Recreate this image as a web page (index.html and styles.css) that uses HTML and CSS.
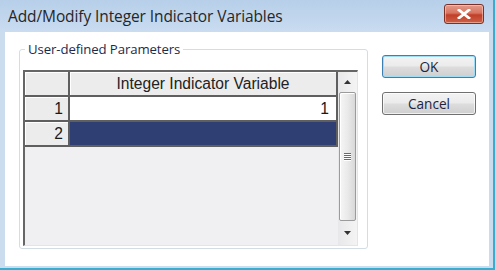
FILE: index.html
```html
<!DOCTYPE html>
<html>
<head>
<meta charset="utf-8">
<link rel="stylesheet" href="styles.css">
</head>
<body>
<div class="window">
  <div class="titlebar">
    <span class="title">Add/Modify Integer Indicator Variables</span>
    <div class="close">
      <svg width="14" height="10" viewBox="0 0 14 10"><path d="M2 1 L12 9 M12 1 L2 9" stroke="#fff" stroke-width="2.8" stroke-linecap="square" fill="none"/></svg>
    </div>
  </div>
  <div class="frame">
    <div class="client">
      <fieldset class="group">
        <legend>User-defined Parameters</legend>
        <div class="grid">
          <div class="cells">
            <div class="hdr corner"></div>
            <div class="hdr colhdr">Integer Indicator Variable</div>
            <div class="hdr rowhdr">1</div>
            <div class="cell">1</div>
            <div class="hdr rowhdr">2</div>
            <div class="cell selected"></div>
          </div>
          <div class="scroll">
            <div class="arrow"><svg width="7" height="4" viewBox="0 0 7 4"><path d="M0 4 L3.5 0 L7 4 Z" fill="#333"/></svg></div>
            <div class="thumb">
              <div class="grip"><span></span><span></span><span></span><span></span></div>
            </div>
            <div class="arrow down"><svg width="7" height="4" viewBox="0 0 7 4"><path d="M0 0 L3.5 4 L7 0 Z" fill="#333"/></svg></div>
          </div>
        </div>
      </fieldset>
      <div class="buttons">
        <button class="btn default">OK</button>
        <button class="btn">Cancel</button>
      </div>
    </div>
  </div>
</div>
</body>
</html>
```
FILE: styles.css
```css
* { box-sizing: border-box; }
html, body { margin: 0; padding: 0; }
body { width: 495px; height: 270px; overflow: hidden; background: #c8dbef; }

.window {
  width: 495px;
  height: 270px;
  display: flex;
  flex-direction: column;
  background: #cbdcef;
  border-right: 2px solid #35aed0;
  border-bottom: 2px solid #35aed0;
}

.titlebar {
  height: 32px;
  flex: none;
  display: flex;
  align-items: center;
  justify-content: space-between;
  padding-left: 8px;
  background: linear-gradient(#b7cfe9, #c9dcf0);
}
.title {
  font-family: "Open Sans", "Noto Sans", sans-serif;
  font-size: 15.5px;
  color: #262626;
  margin-top: -1px;
  letter-spacing: -0.1px;
}
.close {
  width: 40px;
  height: 20px;
  margin-right: 9px;
  margin-top: -5px;
  border: 1px solid #7d3026;
  border-radius: 3px;
  background: linear-gradient(#e49c8a 0%, #d77460 45%, #c23e28 55%, #cc6248 100%);
  box-shadow: inset 0 0 0 1px rgba(255,220,210,0.5);
  display: flex;
  align-items: center;
  justify-content: center;
}

.frame {
  flex: 1;
  display: flex;
  padding: 0 4px 2px 5px;
}
.client {
  flex: 1;
  background: #fff;
  display: flex;
  align-items: flex-start;
  padding-left: 14px;
}

.group {
  margin: 10px 0 0 0;
  padding: 0 9px 2px 3px;
  width: 349px;
  border: 1px solid #d3dde4;
  border-radius: 3px;
  min-width: 0;
}
.group legend {
  font-family: "Open Sans", "Noto Sans", sans-serif;
  font-size: 13.2px;
  line-height: 14px;
  color: #1d2a4a;
  padding: 0 3px;
  margin-left: 2px;
  letter-spacing: -0.1px;
}

.grid {
  margin-top: 14px;
  width: 335px;
  height: 176px;
  display: flex;
  border-top: 2px solid #666;
  border-left: 2px solid #666;
  border-right: 1px solid #e2e4e8;
  border-bottom: 1px solid #e2e4e8;
  background: #f0f0f2;
}
.cells {
  flex: 1;
  display: grid;
  grid-template-columns: 45px 1fr;
  grid-template-rows: 25px 25px 25px;
  align-content: start;
  font-family: "Liberation Sans", Arial, sans-serif;
  font-size: 15.6px;
  color: #1a1a1a;
}
.hdr {
  background: #ececec;
  border-right: 2px solid #5f5f5f;
  border-bottom: 2px solid #5f5f5f;
  box-shadow: inset 1px 1px 0 #fff;
}
.colhdr {
  display: flex;
  align-items: center;
  justify-content: center;
  color: #222;
}
.rowhdr {
  display: flex;
  align-items: center;
  justify-content: flex-end;
  padding-right: 5px;
}
.cell {
  background: #fff;
  border-right: 2px solid #5f5f5f;
  border-bottom: 2px solid #5f5f5f;
  display: flex;
  align-items: center;
  justify-content: flex-end;
  padding-right: 7px;
}
.cell.selected { background: #2f3f74; }

.scroll {
  width: 19px;
  display: flex;
  flex-direction: column;
  background: linear-gradient(90deg, #e8e8ea, #f4f4f5);
}
.arrow {
  height: 20px;
  display: flex;
  align-items: center;
  justify-content: center;
}
.arrow.down { height: 24px; margin-top: auto; }
.thumb {
  height: 129px;
  margin: 0 1px;
  border: 1px solid #9b9b9b;
  border-radius: 2px;
  background: linear-gradient(90deg, #f6f6f6 0%, #eaeaea 50%, #d8d8d8 100%);
  box-shadow: inset 1px 1px 0 #fff;
  display: flex;
  align-items: center;
  justify-content: center;
}
.grip {
  display: flex;
  flex-direction: column;
  gap: 1px;
}
.grip span {
  display: block;
  width: 7px;
  height: 1px;
  background: #6a6a6a;
  box-shadow: 0 1px 0 #fff;
}

.buttons {
  margin-left: 14px;
  margin-top: 23px;
  display: flex;
  flex-direction: column;
  gap: 14px;
}
.btn {
  width: 94px;
  height: 23px;
  border: 1px solid #707070;
  border-radius: 3px;
  background: linear-gradient(#f3f3f3 0%, #ebebeb 48%, #dddddd 52%, #cfcfcf 100%);
  box-shadow: inset 0 0 0 1px rgba(255,255,255,0.7);
  font-family: "Open Sans", "Noto Sans", sans-serif;
  font-size: 13.6px;
  color: #1c2542;
  padding: 0;
}
.btn.default {
  border-color: #3c7fb1;
  box-shadow: inset 0 0 0 1px #9fdcf6;
}
```
